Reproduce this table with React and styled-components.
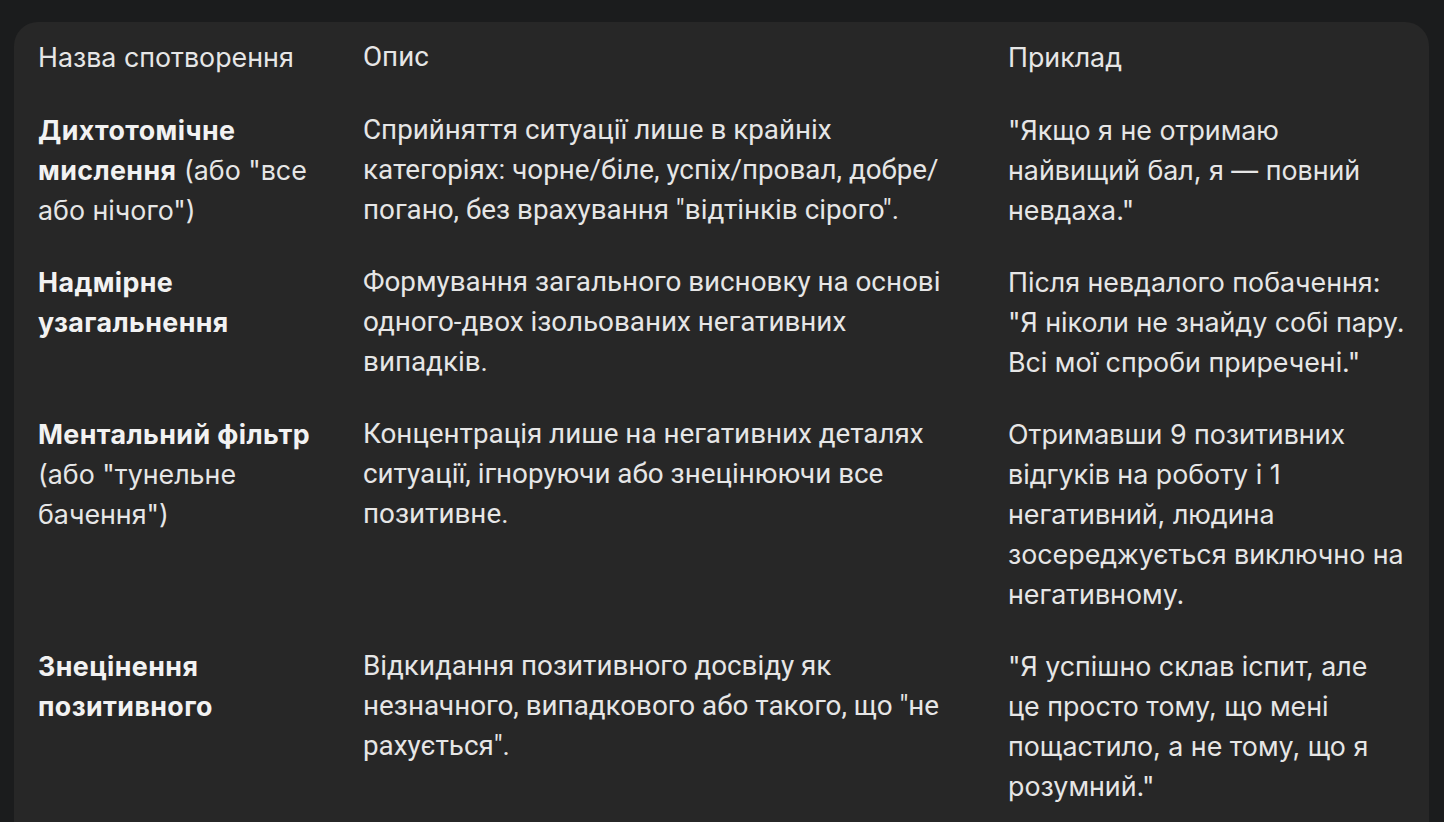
import React from 'react';
import styled, { createGlobalStyle } from 'styled-components';

const GlobalStyle = createGlobalStyle`
  html, body {
    margin: 0;
    padding: 0;
    background: #1b1c1d;
    height: 100%;
    overflow: hidden;
  }
`;

const Page = styled.div`
  padding: 22px 15px 0 14px;
`;

const Card = styled.div`
  background: #272727;
  border-radius: 24px 24px 0 0;
  padding: 0 0 0 24px;
  min-height: 820px;
`;

const Table = styled.div`
  display: grid;
  grid-template-columns: 325px 645px 1fr;
`;

const Cell = styled.div`
  padding: ${p => (p.$head ? '15px 0 17px' : '16px 0')};
  font-family: ${p => (p.$roboto ? 'Roboto' : 'Inter')}, "Noto Sans", sans-serif;
  font-size: ${p => (p.$roboto ? '27.8px' : '26.8px')};
  line-height: 40px;
  color: #e6e6e6;
  white-space: nowrap;

  b {
    font-weight: 700;
    color: #f2f2f2;
    letter-spacing: 0.4px;
  }
`;

const Lines = ({ lines }) =>
  lines.map((l, i) => (
    <React.Fragment key={i}>
      {i > 0 && <br />}
      {l}
    </React.Fragment>
  ));

const rows = [
  {
    name: [<b>Дихтотомічне</b>, <><b>мислення</b> (або "все</>, 'або нічого")'],
    desc: ['Сприйняття ситуації лише в крайніх', 'категоріях: чорне/біле, успіх/провал, добре/', 'погано, без врахування "відтінків сірого".'],
    ex: ['"Якщо я не отримаю', 'найвищий бал, я — повний', 'невдаха."'],
  },
  {
    name: [<b>Надмірне</b>, <b>узагальнення</b>],
    desc: ['Формування загального висновку на основі', 'одного-двох ізольованих негативних', 'випадків.'],
    ex: ['Після невдалого побачення:', '"Я ніколи не знайду собі пару.', 'Всі мої спроби приречені."'],
  },
  {
    name: [<b>Ментальний фільтр</b>, '(або "тунельне', 'бачення")'],
    desc: ['Концентрація лише на негативних деталях', 'ситуації, ігноруючи або знецінюючи все', 'позитивне.'],
    ex: ['Отримавши 9 позитивних', 'відгуків на роботу і 1', 'негативний, людина', 'зосереджується виключно на', 'негативному.'],
  },
  {
    name: [<b>Знецінення</b>, <b>позитивного</b>],
    desc: ['Відкидання позитивного досвіду як', 'незначного, випадкового або такого, що "не', 'рахується".'],
    ex: ['"Я успішно склав іспит, але', 'це просто тому, що мені', 'пощастило, а не тому, що я', 'розумний."'],
  },
];

export default function App() {
  return (
    <>
      <GlobalStyle />
      <Page>
        <Card>
          <Table>
            <Cell $head>Назва спотворення</Cell>
            <Cell $head $roboto>Опис</Cell>
            <Cell $head>Приклад</Cell>
            {rows.map((r, i) => (
              <React.Fragment key={i}>
                <Cell><Lines lines={r.name} /></Cell>
                <Cell $roboto><Lines lines={r.desc} /></Cell>
                <Cell><Lines lines={r.ex} /></Cell>
              </React.Fragment>
            ))}
          </Table>
        </Card>
      </Page>
    </>
  );
}
